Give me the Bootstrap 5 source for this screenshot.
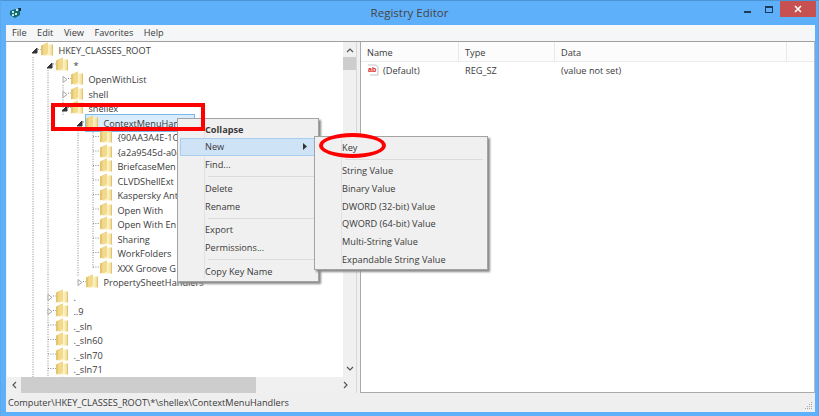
<!DOCTYPE html>
<html lang="en"><head><meta charset="utf-8"><title>Registry Editor</title>
<link href="https://cdn.jsdelivr.net/npm/bootstrap@5.3.0/dist/css/bootstrap.min.css" rel="stylesheet">
<style>
html,body{height:100%;margin:0;overflow:hidden}
body{font-family:"Open Sans","Noto Sans",sans-serif;font-size:9.2px;color:#3a3a3a;background:#5fb0fb}
.win{width:819px;height:416px;border-top:1px solid #4c93d6;border-left:1px solid #5ea7ea;border-right:1px solid #5ea7ea;padding:0 3px 5px 5px}
.titlebar{height:24px;position:relative}
.ttl{font-size:11.5px;color:#444;line-height:24px;text-align:center;padding-right:2px}
.appicon{position:absolute;left:2px;top:5px}
.wbtn{position:absolute;top:0}
.wmin{left:738px;top:10px;width:7px;height:2px;background:#1f3a56}
.wmax{left:759px;top:5px;width:8px;height:7px;border:1px solid #1f3a56;border-top-width:2px}
.wclose{left:774px;width:36px;height:16px;background:#c75050;color:#fff;display:flex;align-items:center;justify-content:center}
.menubar{height:16px;background:#f5f6f7;padding-left:6px;gap:10.5px;line-height:15px;font-size:9.2px}
.panes{height:352px;border-top:1px solid #a0a0a0;background:#f0f0f0}
.leftpane{width:350px;background:#fff;position:relative;border-left:1px solid #f0f0f0}
.treearea{height:336px;position:relative;overflow:hidden}
.treescroll{flex:1 1 auto;overflow:hidden;position:relative}
.trow{height:14.5px;line-height:14px;white-space:nowrap;position:relative}
.guides{position:absolute;left:0;top:0}
.ind0{margin-left:23px}.ind1{margin-left:38px}.ind2{margin-left:53px}.ind3{margin-left:68px}.ind4{margin-left:93px}
.twist{display:inline-block;width:9px;height:9px;vertical-align:-1px;margin-right:2px}
.nosp{display:inline-block;width:11px}
.tfold{vertical-align:-2px;margin-right:3px}
.seltext{background:#d9ecfb;outline:1px solid #7db8e8;display:inline-block;line-height:14px;width:108px}
.vsb{width:13px;background:#f0f0f0;position:relative}
.arr{color:#555;display:flex;align-items:center;justify-content:center}
.vup{height:15px}.vthumb{height:13px;background:#cdcdcd}.vfill{flex:1}.vdown{height:17px}
.hsb{height:16px;background:#f0f0f0}
.hl{width:14px}.hthumb{width:235px;background:#cdcdcd}.hfill{flex:1}.hr{width:20px}
.split{width:5px;background:#f0f0f0;border-left:1px solid #d8d8d8;border-right:1px solid #a9a9a9}
.rightpane{flex:1;background:#fff;border-right:1px solid #bbb;border-bottom:1px solid #aaa}
.hdr{height:20px;background:#fcfcfd;border-bottom:1px solid #ececec;line-height:21px}
.c1,.c2,.c3{padding-left:6px}
.c1{width:98px;border-right:1px solid #e8e8e8}.c2{width:96px;border-right:1px solid #e8e8e8}.c3{width:232px;border-right:1px solid #e8e8e8}
.lrow{line-height:15px;padding-top:1px}
.lc1{width:98px;padding-left:6px}.lc2{width:96px;padding-left:6px}.lc3{padding-left:6px}
.abicon{vertical-align:-2px}
.status{height:19px;background:#efefef;line-height:20px;padding-left:2px;position:relative}
.grip{position:absolute;right:2px;bottom:2px}
.cmenu{position:absolute;background:#f0f0f0;border:1px solid #a3a3a3;box-shadow:2px 2px 2px #8a8a8a;z-index:5}
.ctx1{left:176px;top:117px;width:142px;height:164px;padding:1.5px 2px}
.ctx2{left:313px;top:135px;width:174px;height:134px;padding:1.5px 2px}
.ctx1::before,.ctx2::before{content:"";position:absolute;left:26px;top:2px;bottom:2px;border-left:1px solid #e2e2e2}
.mi{height:17.7px;line-height:17px;padding-left:25px;position:relative}
.mi.hot{background:#cfe3f6;outline:1px solid #a9cdee;outline-offset:-1px;height:18px}
.msep{height:1px;background:#dcdcdc;margin:2.5px 2px 2.5px 28px}
.mtop{font-weight:700}
.msub{position:absolute;right:9px;top:5px}
.red1{position:absolute;left:50px;top:102px;width:154px;height:28px;border:4px solid #f00;z-index:6}
.red2{position:absolute;left:318px;top:132px;width:67px;height:25px;border:4.5px solid #f00;border-radius:50%;z-index:6}
</style></head>
<body>
<svg width="0" height="0" class="position-absolute">
<defs>
<linearGradient id="fg" x1="0" x2="1" y1="0" y2="0"><stop offset="0" stop-color="#f4e29a"/><stop offset=".55" stop-color="#fcf3c6"/><stop offset="1" stop-color="#efd584"/></linearGradient>
<symbol id="fold" viewBox="0 0 12 14"><path d="M0 3.5 7 .5 V11 L0 13.5Z" fill="#e3c56e"/><path d="M2.5 2.5 H12 V13.5 H2.5Z" fill="url(#fg)"/><path d="M7 .8V11.2L2.5 13.5V3Z" fill="#f2d98b"/><path d="M11.7 2.5V13.5" stroke="#cfae5a" stroke-width=".6"/></symbol>
<symbol id="tc" viewBox="0 0 9 9"><path d="M3 1.5 7 4.5 3 7.5Z" fill="#fff" stroke="#a6a6a6"/></symbol>
<symbol id="te" viewBox="0 0 9 9"><path d="M7 2V7H2Z" fill="#333" stroke="#333"/></symbol>
</defs></svg>
<div class="win d-flex flex-column position-relative">
 <div class="titlebar flex-shrink-0">
  <svg class="appicon" width="14" height="14" viewBox="0 0 14 14"><path d="M2 5 7 3l5 2v4l-5 3-5-3Z" fill="#166a72"/><path d="M4 5h2v2H4zM7 7h2v2H7zM4 8h2v2H4zM8 3h2v2H8z" fill="#bff0ee"/><path d="M10 2h3v3h-2z" fill="#17323b"/></svg>
  <div class="ttl">Registry Editor</div>
  <div class="wbtn wmin"></div><div class="wbtn wmax"></div>
  <div class="wbtn wclose"><svg width="8" height="8" viewBox="0 0 8 8"><path d="M1 1 7 7M7 1 1 7" stroke="#fff" stroke-width="1.6"/></svg></div>
 </div>
 <div class="menubar d-flex flex-shrink-0"><span>File</span><span>Edit</span><span>View</span><span>Favorites</span><span>Help</span></div>
 <div class="panes d-flex flex-shrink-0">
  <div class="leftpane d-flex flex-column">
   <div class="treearea d-flex">
    <div class="treescroll">
     <svg class="guides" width="340" height="336"><g stroke="#8a8a8a" stroke-dasharray="1 1.4" fill="none"><path d="M26 15V336M41 28V336M56 43V74M71 86V235M86 88V226"/>
<path d="M31 7.5h3M46 22h3M61 36.5h3M61 51h3M61 65.5h3M76 80h3M86 94.5h10M86 109h10M86 123.5h10M86 138h10M86 152.5h10M86 167h10M86 181.5h10M86 196h10M86 210.5h10M86 225h10M76 239.5h3M46 254h3M46 268.5h3M41 283h9M41 297.5h9M41 312h9M41 326.5h9"/></g></svg>
     <div class="trow ind0"><svg class="twist"><use href="#te"/></svg><svg class="tfold" width="12" height="14"><use href="#fold"/></svg> HKEY_CLASSES_ROOT</div>
     <div class="trow ind1"><svg class="twist"><use href="#te"/></svg><svg class="tfold" width="12" height="14"><use href="#fold"/></svg> *</div>
     <div class="trow ind2"><svg class="twist"><use href="#tc"/></svg><svg class="tfold" width="12" height="14"><use href="#fold"/></svg> OpenWithList</div>
     <div class="trow ind2"><svg class="twist"><use href="#tc"/></svg><svg class="tfold" width="12" height="14"><use href="#fold"/></svg> shell</div>
     <div class="trow ind2"><svg class="twist"><use href="#te"/></svg><svg class="tfold" width="12" height="14"><use href="#fold"/></svg> shellex</div>
     <div class="trow ind3"><svg class="twist"><use href="#te"/></svg><span class="seltext"><svg class="tfold" width="12" height="14"><use href="#fold"/></svg> ContextMenuHan</span></div>
     <div class="trow ind4"><svg class="tfold" width="12" height="14"><use href="#fold"/></svg> {90AA3A4E-1C</div>
     <div class="trow ind4"><svg class="tfold" width="12" height="14"><use href="#fold"/></svg> {a2a9545d-a0c</div>
     <div class="trow ind4"><svg class="tfold" width="12" height="14"><use href="#fold"/></svg> BriefcaseMen</div>
     <div class="trow ind4"><svg class="tfold" width="12" height="14"><use href="#fold"/></svg> CLVDShellExt</div>
     <div class="trow ind4"><svg class="tfold" width="12" height="14"><use href="#fold"/></svg> Kaspersky Ant</div>
     <div class="trow ind4"><svg class="tfold" width="12" height="14"><use href="#fold"/></svg> Open With</div>
     <div class="trow ind4"><svg class="tfold" width="12" height="14"><use href="#fold"/></svg> Open With En</div>
     <div class="trow ind4"><svg class="tfold" width="12" height="14"><use href="#fold"/></svg> Sharing</div>
     <div class="trow ind4"><svg class="tfold" width="12" height="14"><use href="#fold"/></svg> WorkFolders</div>
     <div class="trow ind4"><svg class="tfold" width="12" height="14"><use href="#fold"/></svg> XXX Groove G</div>
     <div class="trow ind3"><svg class="twist"><use href="#tc"/></svg><svg class="tfold" width="12" height="14"><use href="#fold"/></svg> PropertySheetHandlers</div>
     <div class="trow ind1"><svg class="twist"><use href="#tc"/></svg><svg class="tfold" width="12" height="14"><use href="#fold"/></svg> .</div>
     <div class="trow ind1"><svg class="twist"><use href="#tc"/></svg><svg class="tfold" width="12" height="14"><use href="#fold"/></svg> ..9</div>
     <div class="trow ind1"><span class="nosp"></span><svg class="tfold" width="12" height="14"><use href="#fold"/></svg> ._sln</div>
     <div class="trow ind1"><span class="nosp"></span><svg class="tfold" width="12" height="14"><use href="#fold"/></svg> ._sln60</div>
     <div class="trow ind1"><span class="nosp"></span><svg class="tfold" width="12" height="14"><use href="#fold"/></svg> ._sln70</div>
     <div class="trow ind1"><span class="nosp"></span><svg class="tfold" width="12" height="14"><use href="#fold"/></svg> ._sln71</div>
     <div class="trow ind1"><span class="nosp"></span><svg class="tfold" width="12" height="14"><use href="#fold"/></svg></div>
    </div>
    <div class="vsb d-flex flex-column flex-shrink-0">
     <div class="vup arr"><svg width="8" height="6" viewBox="0 0 8 6"><path d="M1 5 4 2l3 3" fill="none" stroke="#555" stroke-width="1.2"/></svg></div>
     <div class="vthumb"></div><div class="vfill"></div>
     <div class="vdown arr"><svg width="8" height="6" viewBox="0 0 8 6"><path d="M1 1 4 4l3-3" fill="none" stroke="#555" stroke-width="1.2"/></svg></div>
    </div>
   </div>
   <div class="hsb d-flex flex-shrink-0">
    <div class="hl arr"><svg width="6" height="8" viewBox="0 0 6 8"><path d="M5 1 2 4l3 3" fill="none" stroke="#555" stroke-width="1.2"/></svg></div>
    <div class="hthumb"></div><div class="hfill"></div>
    <div class="hr arr"><svg width="6" height="8" viewBox="0 0 6 8"><path d="M1 1 4 4 1 7" fill="none" stroke="#555" stroke-width="1.2"/></svg></div>
   </div>
  </div>
  <div class="split"></div>
  <div class="rightpane">
   <div class="hdr d-flex"><div class="c1">Name</div><div class="c2">Type</div><div class="c3">Data</div></div>
   <div class="lrow d-flex"><div class="lc1"><svg width="12" height="12" viewBox="0 0 12 12" class="me-1 abicon"><path d="M1 1h8l2 2v8H3" fill="#fff" stroke="#aaa" stroke-width=".7"/><text x="1" y="8" font-size="7" font-family="Liberation Sans" font-weight="700" fill="#d22">ab</text></svg>(Default)</div><div class="lc2">REG_SZ</div><div class="lc3">(value not set)</div></div>
  </div>
 </div>
 <div class="status flex-shrink-0">Computer\HKEY_CLASSES_ROOT\*\shellex\ContextMenuHandlers
  <svg class="grip" width="8" height="8" viewBox="0 0 8 8"><path d="M6 0h1v1H6zM4 2h1v1H4zM6 2h1v1H6zM2 4h1v1H2zM4 4h1v1H4zM6 4h1v1H6zM0 6h1v1H0zM2 6h1v1H2zM4 6h1v1H4zM6 6h1v1H6z" fill="#aaa"/></svg>
 </div>
 <div class="cmenu ctx1">
  <div class="mi mtop">Collapse</div>
  <div class="mi hot">New<svg class="msub" width="4" height="7" viewBox="0 0 4 7"><path d="M0 0 4 3.5 0 7Z" fill="#333"/></svg></div>
  <div class="mi">Find...</div><div class="msep"></div>
  <div class="mi">Delete</div><div class="mi">Rename</div><div class="msep"></div>
  <div class="mi">Export</div><div class="mi">Permissions...</div><div class="msep"></div>
  <div class="mi">Copy Key Name</div>
 </div>
 <div class="cmenu ctx2">
  <div class="mi">Key</div><div class="msep"></div>
  <div class="mi">String Value</div><div class="mi">Binary Value</div><div class="mi">DWORD (32-bit) Value</div><div class="mi">QWORD (64-bit) Value</div><div class="mi">Multi-String Value</div><div class="mi">Expandable String Value</div>
 </div>
 <div class="red1"></div><div class="red2"></div>
</div>
<script src="https://cdn.jsdelivr.net/npm/bootstrap@5.3.0/dist/js/bootstrap.bundle.min.js"></script>
</body></html>
